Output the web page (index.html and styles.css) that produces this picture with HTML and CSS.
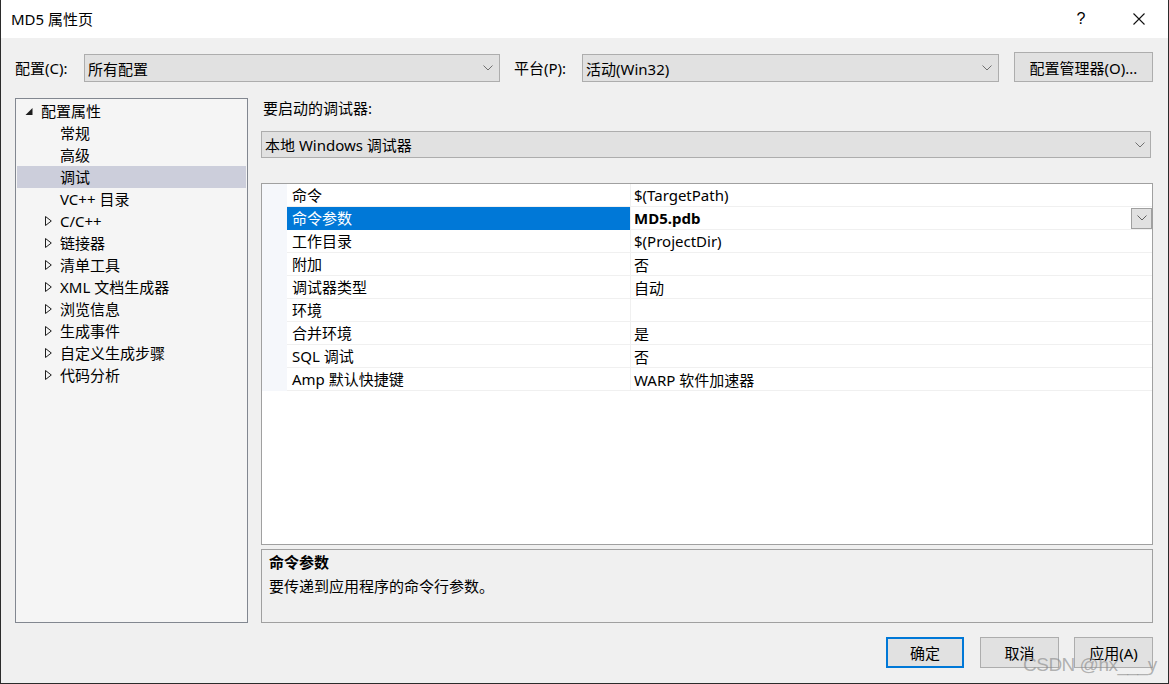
FILE: index.html
```
<!DOCTYPE html>
<html lang="zh-CN">
<head>
    <meta charset="UTF-8">
    <title>MD5 属性页</title>
    <link rel="stylesheet" href="styles.css">
</head>
<body>
    <div class="window">
        <div class="title-bar">
            <span class="title">MD5 属性页</span>
            <div class="title-btns">
                <span class="help">?</span>
                <svg class="close" width="12" height="12" viewBox="0 0 12 12">
                    <path d="M0.5 0.5 L11.5 11.5 M11.5 0.5 L0.5 11.5" stroke="#111" stroke-width="1.1" fill="none"/>
                </svg>
            </div>
        </div>

        <div class="content">
            <div class="config-row">
                <label class="cfg-label first">配置(C):</label>
                <div class="combo cfg-combo">
                    <span>所有配置</span>
                    <svg width="10" height="6" viewBox="0 0 10 6"><polyline points="0.5,0.5 5,5 9.5,0.5" stroke="#707070" fill="none"/></svg>
                </div>
                <label class="cfg-label second">平台(P):</label>
                <div class="combo cfg-combo wide">
                    <span>活动(Win32)</span>
                    <svg width="10" height="6" viewBox="0 0 10 6"><polyline points="0.5,0.5 5,5 9.5,0.5" stroke="#707070" fill="none"/></svg>
                </div>
                <button class="btn manager">配置管理器(O)...</button>
            </div>

            <div class="main">
                <div class="tree">
                    <div class="tree-row root">
                        <svg class="tri" width="8" height="7" viewBox="0 0 8 7"><polygon points="7.5,0 7.5,7 0.5,7" fill="#1e1e1e"/></svg>
                        <span>配置属性</span>
                    </div>
                    <div class="tree-row leaf">常规</div>
                    <div class="tree-row leaf">高级</div>
                    <div class="tree-row leaf selected">调试</div>
                    <div class="tree-row leaf">VC++ 目录</div>
                    <div class="tree-row node">
                        <svg class="tri" width="7" height="10" viewBox="0 0 7 10"><polygon points="0.5,0.5 6.3,5 0.5,9.5" stroke="#1e1e1e" fill="none"/></svg>
                        <span>C/C++</span>
                    </div>
                    <div class="tree-row node">
                        <svg class="tri" width="7" height="10" viewBox="0 0 7 10"><polygon points="0.5,0.5 6.3,5 0.5,9.5" stroke="#1e1e1e" fill="none"/></svg>
                        <span>链接器</span>
                    </div>
                    <div class="tree-row node">
                        <svg class="tri" width="7" height="10" viewBox="0 0 7 10"><polygon points="0.5,0.5 6.3,5 0.5,9.5" stroke="#1e1e1e" fill="none"/></svg>
                        <span>清单工具</span>
                    </div>
                    <div class="tree-row node">
                        <svg class="tri" width="7" height="10" viewBox="0 0 7 10"><polygon points="0.5,0.5 6.3,5 0.5,9.5" stroke="#1e1e1e" fill="none"/></svg>
                        <span>XML 文档生成器</span>
                    </div>
                    <div class="tree-row node">
                        <svg class="tri" width="7" height="10" viewBox="0 0 7 10"><polygon points="0.5,0.5 6.3,5 0.5,9.5" stroke="#1e1e1e" fill="none"/></svg>
                        <span>浏览信息</span>
                    </div>
                    <div class="tree-row node">
                        <svg class="tri" width="7" height="10" viewBox="0 0 7 10"><polygon points="0.5,0.5 6.3,5 0.5,9.5" stroke="#1e1e1e" fill="none"/></svg>
                        <span>生成事件</span>
                    </div>
                    <div class="tree-row node">
                        <svg class="tri" width="7" height="10" viewBox="0 0 7 10"><polygon points="0.5,0.5 6.3,5 0.5,9.5" stroke="#1e1e1e" fill="none"/></svg>
                        <span>自定义生成步骤</span>
                    </div>
                    <div class="tree-row node">
                        <svg class="tri" width="7" height="10" viewBox="0 0 7 10"><polygon points="0.5,0.5 6.3,5 0.5,9.5" stroke="#1e1e1e" fill="none"/></svg>
                        <span>代码分析</span>
                    </div>
                </div>

                <div class="panel">
                    <div class="panel-label">要启动的调试器:</div>
                    <div class="combo debugger">
                        <span>本地 Windows 调试器</span>
                        <svg width="10" height="6" viewBox="0 0 10 6"><polyline points="0.5,0.5 5,5 9.5,0.5" stroke="#707070" fill="none"/></svg>
                    </div>

                    <div class="grid">
                        <div class="grid-row">
                            <div class="gutter"></div>
                            <div class="name">命令</div>
                            <div class="value">$(TargetPath)</div>
                        </div>
                        <div class="grid-row active">
                            <div class="gutter"></div>
                            <div class="name">命令参数</div>
                            <div class="value">
                                <b>MD5.pdb</b>
                                <span class="drop-btn">
                                    <svg width="10" height="6" viewBox="0 0 10 6"><polyline points="0.5,0.5 5,5 9.5,0.5" stroke="#606060" fill="none"/></svg>
                                </span>
                            </div>
                        </div>
                        <div class="grid-row">
                            <div class="gutter"></div>
                            <div class="name">工作目录</div>
                            <div class="value">$(ProjectDir)</div>
                        </div>
                        <div class="grid-row">
                            <div class="gutter"></div>
                            <div class="name">附加</div>
                            <div class="value">否</div>
                        </div>
                        <div class="grid-row">
                            <div class="gutter"></div>
                            <div class="name">调试器类型</div>
                            <div class="value">自动</div>
                        </div>
                        <div class="grid-row">
                            <div class="gutter"></div>
                            <div class="name">环境</div>
                            <div class="value"></div>
                        </div>
                        <div class="grid-row">
                            <div class="gutter"></div>
                            <div class="name">合并环境</div>
                            <div class="value">是</div>
                        </div>
                        <div class="grid-row">
                            <div class="gutter"></div>
                            <div class="name">SQL 调试</div>
                            <div class="value">否</div>
                        </div>
                        <div class="grid-row">
                            <div class="gutter"></div>
                            <div class="name">Amp 默认快捷键</div>
                            <div class="value">WARP 软件加速器</div>
                        </div>
                    </div>

                    <div class="desc">
                        <div class="desc-title">命令参数</div>
                        <div class="desc-text">要传递到应用程序的命令行参数。</div>
                    </div>
                </div>
            </div>

            <div class="footer">
                <button class="btn default">确定</button>
                <button class="btn cancel">取消</button>
                <button class="btn apply">应用(A)</button>
            </div>
        </div>

        <div class="watermark">CSDN @hx___y</div>
    </div>
</body>
</html>
```

FILE: styles.css
```
* {
    box-sizing: border-box;
}
body {
    margin: 0;
    padding: 0;
    font-family: "Noto Sans", "Noto Sans CJK SC", sans-serif;
    font-size: 15px;
    color: #000;
    background: #f0f0f0;
}
.window {
    position: relative;
    width: 1169px;
    height: 684px;
    background: #f0f0f0;
    border: 1px solid #2b2b2b;
    border-top: none;
    overflow: hidden;
}
.title-bar {
    height: 38px;
    background: #fff;
    display: flex;
    align-items: center;
    justify-content: space-between;
    padding-left: 10px;
}
.title {
    line-height: 20px;
}
.title-btns {
    display: flex;
    align-items: center;
    padding-right: 23px;
}
.help {
    width: 10px;
    text-align: center;
    font-size: 16px;
    margin-right: 47px;
    font-family: "Liberation Sans", sans-serif;
}
.content {
    padding: 14px 15px 0 14px;
}
.config-row {
    display: flex;
    align-items: flex-end;
    height: 30px;
}
.cfg-label {
    height: 28px;
    line-height: 28px;
}
.cfg-label.first {
    width: 69px;
}
.cfg-label.second {
    width: 68px;
    margin-left: 14px;
}
.combo {
    display: flex;
    align-items: center;
    justify-content: space-between;
    background: #e1e1e1;
    border: 1px solid #adadad;
    padding: 0 6px 0 3px;
}
.cfg-combo {
    width: 416px;
    height: 28px;
}
.cfg-combo.wide {
    width: 417px;
}
.btn {
    font-family: inherit;
    font-size: 15px;
    color: #000;
    background: #e1e1e1;
    border: 1px solid #adadad;
    padding: 0;
    height: 31px;
}
.manager {
    width: 139px;
    height: 30px;
    margin-left: 15px;
}
.main {
    display: flex;
    margin-top: 16px;
    height: 525px;
}
.tree {
    width: 233px;
    background: #f5f5f5;
    border: 1px solid #828790;
    padding: 1px;
}
.tree-row {
    height: 22px;
    line-height: 22px;
    display: flex;
    align-items: center;
    white-space: nowrap;
}
.tree-row .tri {
    flex: none;
}
.tree-row.root {
    padding-left: 8px;
    gap: 8px;
}
.tree-row.node {
    padding-left: 28px;
    gap: 8px;
}
.tree-row.leaf {
    padding-left: 43px;
}
.tree-row.selected {
    background: #cccedb;
}
.panel {
    flex: 1;
    margin-left: 13px;
    display: flex;
    flex-direction: column;
}
.panel-label {
    height: 20px;
    line-height: 20px;
    padding-left: 2px;
}
.debugger {
    margin-top: 13px;
    height: 27px;
    width: 890px;
    padding-right: 5px;
}
.grid {
    margin-top: 25px;
    height: 362px;
    background: #fff;
    border: 1px solid #a0a0a0;
}
.grid-row {
    display: flex;
    height: 23px;
}
.gutter {
    width: 25px;
    background: #f5f7fb;
}
.name {
    width: 343px;
    padding-left: 5px;
    line-height: 22px;
    border-bottom: 1px solid #f0f0f0;
    white-space: nowrap;
}
.value {
    flex: 1;
    display: flex;
    align-items: center;
    justify-content: space-between;
    padding-left: 3px;
    height: 23px;
    border-left: 1px solid #f0f0f0;
    border-bottom: 1px solid #f0f0f0;
    white-space: nowrap;
}
.grid-row.active .name {
    background: #0078d7;
    color: #fff;
    border-bottom-color: #0078d7;
}
.drop-btn {
    width: 21px;
    height: 21px;
    margin-right: 0;
    background: #e1e1e1;
    border: 1px solid #a0a0a0;
    display: flex;
    align-items: center;
    justify-content: center;
}
.desc {
    margin-top: 4px;
    height: 74px;
    border: 1px solid #a0a0a0;
    background: #f0f0f0;
    padding: 1px 7px;
}
.desc-title {
    font-weight: bold;
    line-height: 22px;
}
.desc-text {
    margin-top: 2px;
    line-height: 22px;
}
.footer {
    display: flex;
    justify-content: flex-end;
    margin-top: 14px;
}
.footer .btn {
    width: 79px;
}
.footer .default {
    border: 2px solid #0078d7;
    width: 78px;
}
.cancel {
    margin-left: 16px;
}
.apply {
    margin-left: 15px;
}
.watermark {
    position: absolute;
    left: 1022px;
    top: 654px;
    font-family: "Liberation Sans", sans-serif;
    font-size: 19px;
    letter-spacing: -0.5px;
    color: rgba(140, 140, 140, 0.65);
    white-space: nowrap;
    pointer-events: none;
}
```
